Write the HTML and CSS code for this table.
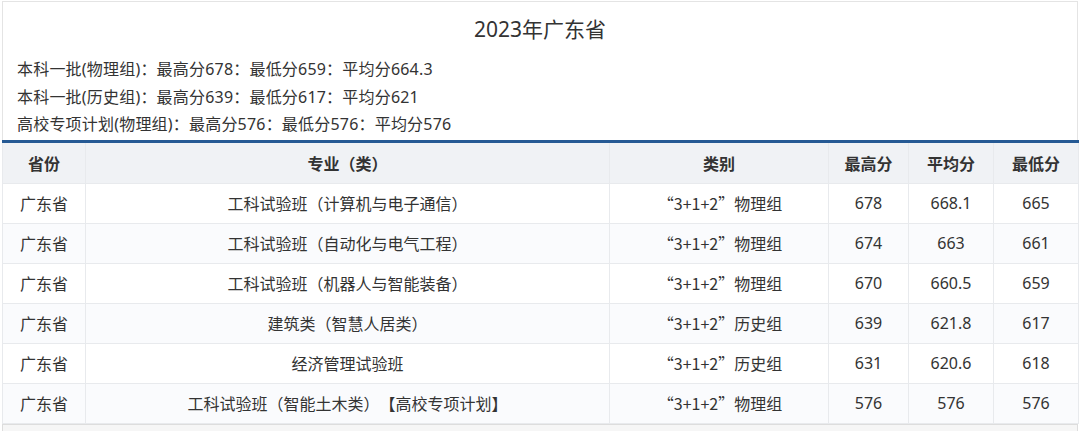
FILE: index.html
```html
<!DOCTYPE html>
<html lang="zh">
<head>
<meta charset="utf-8">
<link rel="stylesheet" href="styles.css">
</head>
<body>
<div class="wrap">
  <div class="head">
    <h1 class="title">2023年广东省</h1>
    <div class="info">
      <p>本科一批(物理组)：最高分678：最低分659：平均分664.3</p>
      <p>本科一批(历史组)：最高分639：最低分617：平均分621</p>
      <p>高校专项计划(物理组)：最高分576：最低分576：平均分576</p>
    </div>
  </div>
  <table class="scores">
    <colgroup>
      <col class="c-prov"><col class="c-major"><col class="c-type"><col class="c-max"><col class="c-avg"><col class="c-min">
    </colgroup>
    <thead>
      <tr><th>省份</th><th>专业（类）</th><th>类别</th><th>最高分</th><th>平均分</th><th>最低分</th></tr>
    </thead>
    <tbody>
      <tr><td>广东省</td><td>工科试验班（计算机与电子通信）</td><td class="type">“3+1+2”物理组</td><td>678</td><td>668.1</td><td>665</td></tr>
      <tr><td>广东省</td><td>工科试验班（自动化与电气工程）</td><td class="type">“3+1+2”物理组</td><td>674</td><td>663</td><td>661</td></tr>
      <tr><td>广东省</td><td>工科试验班（机器人与智能装备）</td><td class="type">“3+1+2”物理组</td><td>670</td><td>660.5</td><td>659</td></tr>
      <tr><td>广东省</td><td>建筑类（智慧人居类）</td><td class="type">“3+1+2”历史组</td><td>639</td><td>621.8</td><td>617</td></tr>
      <tr><td>广东省</td><td>经济管理试验班</td><td class="type">“3+1+2”历史组</td><td>631</td><td>620.6</td><td>618</td></tr>
      <tr><td>广东省</td><td>工科试验班（智能土木类）【高校专项计划】</td><td class="type">“3+1+2”物理组</td><td>576</td><td>576</td><td>576</td></tr>
    </tbody>
  </table>
  <div class="foot"></div>
</div>
</body>
</html>
```

FILE: styles.css
```css
html, body {
  margin: 0;
  padding: 0;
  background: #ffffff;
}
body {
  padding: 1px 3px 0 2px;
  font-family: "Noto Sans", "Noto Sans CJK SC", sans-serif;
  color: #333333;
}
.wrap {
  width: 1076px;
}
.head {
  border: 1px solid #e4e4e4;
  border-bottom: none;
  padding: 11px 0 1px 14px;
}
.title {
  margin: 0;
  padding-right: 14px;
  font-size: 21px;
  font-weight: normal;
  line-height: 32px;
  text-align: center;
  color: #333333;
}
.info {
  margin-top: 11px;
}
.info p {
  margin: 0;
  font-size: 16px;
  line-height: 27.5px;
  letter-spacing: 0.2px;
  color: #333333;
}
.scores {
  width: 1076px;
  table-layout: fixed;
  border-collapse: collapse;
  border-top: 3px solid #265a94;
  font-size: 16px;
}
.c-prov { width: 83px; }
.c-major { width: 524px; }
.c-type { width: 219px; }
.c-max { width: 80px; }
.c-avg { width: 85px; }
.c-min { width: 85px; }
.scores th, .scores td {
  border: 1px solid #e8eaed;
  text-align: center;
  padding: 0;
  color: #333333;
  text-spacing-trim: space-all;
}
.scores th {
  height: 40px;
  background: #f0f2f5;
  font-weight: bold;
}
.scores td {
  height: 39px;
  background: #fafbfd;
}
.scores td.type {
  font-family: "Noto Sans CJK SC", "Noto Sans", sans-serif;
  padding-left: 2px;
}
.scores tbody tr:nth-child(odd) td {
  background: #ffffff;
}
.foot {
  height: 10px;
  border: 1px solid #dddddd;
  background: #f6f6f6;
}
```
